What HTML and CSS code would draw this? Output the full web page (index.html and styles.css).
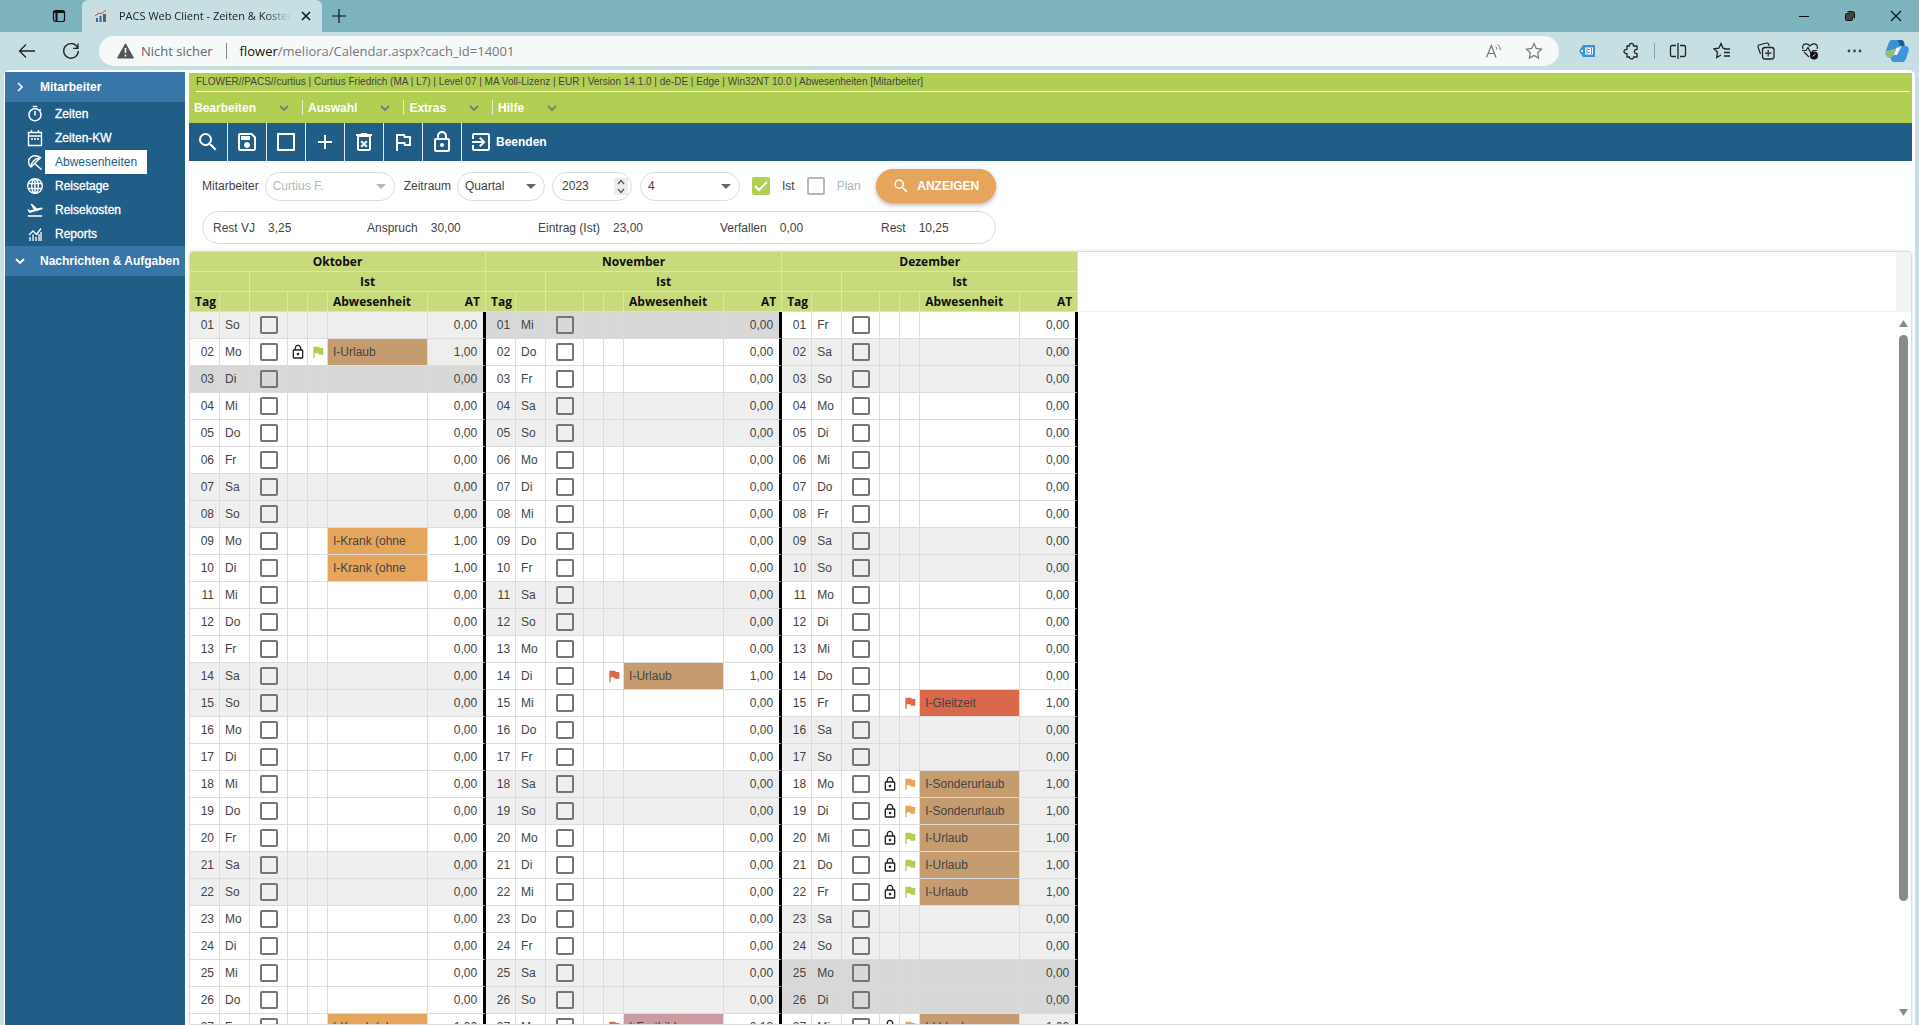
FILE: index.html
```html
<!DOCTYPE html>
<html lang="de">
<head>
<meta charset="utf-8">
<title>PACS Web Client - Zeiten &amp; Kosten</title>
<link rel="stylesheet" href="styles.css">
</head>
<body>
<svg class="sprite" aria-hidden="true">
  <symbol id="search" viewBox="0 0 24 24"><path d="M15.5 14h-.79l-.28-.27A6.47 6.47 0 0 0 16 9.500 6.500 6.500 0 1 0 9.500 16c1.610 0 3.090-.59 4.230-1.570l.27.28v.79l5 4.990L20.490 19l-4.990-5zm-6 0C7.010 14 5 11.990 5 9.500S7.010 5 9.500 5 14 7.010 14 9.500 11.990 14 9.500 14z"/></symbol>
  <symbol id="save" viewBox="0 0 24 24"><path d="M17 3H5c-1.110 0-2 .9-2 2v14c0 1.100.89 2 2 2h14c1.100 0 2-.9 2-2V7l-4-4zm2 16H5V5h11.170L19 7.830V19zm-7-7c-1.660 0-3 1.340-3 3s1.340 3 3 3 3-1.340 3-3-1.340-3-3-3zM6 6h9v4H6V6z"/></symbol>
  <symbol id="square" viewBox="0 0 24 24"><path d="M3 3h18v18H3zM5 5v14h14V5z" fill-rule="evenodd"/></symbol>
  <symbol id="plus" viewBox="0 0 24 24"><path d="M19 13h-6v6h-2v-6H5v-2h6V5h2v6h6v2z"/></symbol>
  <symbol id="bin" viewBox="0 0 24 24"><path d="M14.120 10.470L12 12.590l-2.130-2.120-1.410 1.410L10.590 14l-2.120 2.120 1.410 1.410L12 15.410l2.120 2.120 1.410-1.410L13.410 14l2.120-2.120zM15.500 4l-1-1h-5l-1 1H4v2h16V4zM5 19c0 1.100.9 2 2 2h10c1.100 0 2-.9 2-2V6H5v13zM7 7h10v12H7V7z"/></symbol>
  <symbol id="flag-line" viewBox="0 0 24 24"><path d="M12.360 6l.4 2H18v6h-3.360l-.4-2H7V6h5.360M14 4H5v17h2v-7h5.600l.4 2h7V6h-5.600L14 4z"/></symbol>
  <symbol id="flag" viewBox="0 0 24 24"><path d="M14.400 6L14 4H5v17h2v-7h5.600l.4 2h7V6z"/></symbol>
  <symbol id="lock" viewBox="0 0 24 24"><path d="M18 8h-1V6c0-2.760-2.240-5-5-5S7 3.240 7 6v2H6c-1.100 0-2 .9-2 2v10c0 1.100.9 2 2 2h12c1.100 0 2-.9 2-2V10c0-1.100-.9-2-2-2zM9 6c0-1.660 1.340-3 3-3s3 1.340 3 3v2H9V6zm9 14H6V10h12v10zm-6-3c1.100 0 2-.9 2-2s-.9-2-2-2-2 .9-2 2 .9 2 2 2z"/></symbol>
  <symbol id="exit" viewBox="0 0 24 24"><path d="M10.090 15.590L11.500 17l5-5-5-5-1.410 1.410L12.670 11H3v2h9.670l-2.580 2.590zM19 3H5c-1.110 0-2 .9-2 2v4h2V5h14v14H5v-4H3v4c0 1.100.89 2 2 2h14c1.100 0 2-.9 2-2V5c0-1.100-.9-2-2-2z"/></symbol>
  <symbol id="timer" viewBox="0 0 24 24"><path d="M15 1H9v2h6V1zm-4 13h2V8h-2v6zm8.030-6.610l1.420-1.420c-.43-.51-.9-.99-1.410-1.410l-1.420 1.420C16.070 4.740 14.120 4 12 4c-4.970 0-9 4.030-9 9s4.020 9 9 9 9-4.030 9-9c0-2.120-.74-4.070-1.970-5.610zM12 20c-3.870 0-7-3.130-7-7s3.130-7 7-7 7 3.130 7 7-3.130 7-7 7z"/></symbol>
  <symbol id="plane" viewBox="0 0 24 24"><path d="M2.500 19h19v2h-19v-2zm19.570-9.360c-.21-.8-1.040-1.280-1.840-1.060L14.920 10l-6.900-6.430-1.930.51 4.140 7.170-4.970 1.330-1.970-1.540-1.450.39 2.590 4.490L21 11.490c.81-.23 1.280-1.050 1.070-1.850z"/></symbol>
  <symbol id="calendar" viewBox="0 0 18 18"><g fill="none" stroke="currentColor" stroke-width="1.400"><path d="M2.500 3.500h13v13h-13zM2.500 7h13M5.500 1v3M12.500 1v3"/><path d="M5 10h8" stroke-dasharray="2 1"/></g></symbol>
  <symbol id="umbrella" viewBox="0 0 18 18"><g fill="none" stroke="currentColor" stroke-width="1.500"><path d="M5 14C1.500 10.500 2 6 5 4s6.500-1.500 9.500.5zM8.500 10.500L15.500 16.500M5 14c0-4 3-8 9.500-9.500"/></g></symbol>
  <symbol id="globe" viewBox="0 0 18 18"><g fill="none" stroke="currentColor" stroke-width="1.400"><circle cx="9" cy="9" r="7.300"/><ellipse cx="9" cy="9" rx="3.300" ry="7.300"/><path d="M2.300 6.500h13.400M2.300 11.500h13.400M9 2v14"/></g></symbol>
  <symbol id="chart" viewBox="0 0 18 18"><g fill="none" stroke="currentColor" stroke-width="1.300"><path d="M3 10l4-4 3.500 3.500L15 3.500M4 16v-4M7 16V9.500M10 16v-4M13 16V9M15 16V7"/></g></symbol>
  <symbol id="down" viewBox="0 0 12 12"><path d="M2 4l4 4 4-4" fill="none" stroke="currentColor" stroke-width="1.800"/></symbol>
  <symbol id="right" viewBox="0 0 12 12"><path d="M4 2l4 4-4 4" fill="none" stroke="currentColor" stroke-width="1.500"/></symbol>
</svg>

<header class="browser">
  <div class="tabstrip">
    <button class="icon-btn workspaces" aria-label="Tabaktionen"><svg width="14" height="14" viewBox="0 0 14 14"><rect x="1.500" y="1.500" width="11" height="11" rx="2" fill="none" stroke="#111" stroke-width="1.200"/><path d="M1.500 3h11M4.500 4v8" stroke="#111" stroke-width="2"/></svg></button>
    <div class="tab">
      <svg width="16" height="16" viewBox="0 0 16 16"><rect width="16" height="16" rx="2" fill="#d8d8d6"/><path d="M3 14v-4h2v4zM6.500 14V8h2v6zM10 14V6h3v8z" fill="#2f6d9c"/><path d="M2 8l4-3 2 1 5-4" fill="none" stroke="#666"/></svg>
      <span class="tab-title">PACS Web Client - Zeiten &amp; Kosten</span>
      <button class="icon-btn" aria-label="Tab schließen"><svg width="10" height="10" viewBox="0 0 10 10"><path d="M1 1l8 8M9 1L1 9" stroke="#111" stroke-width="1.500"/></svg></button>
    </div>
    <button class="icon-btn new-tab" aria-label="Neuer Tab"><svg width="14" height="14" viewBox="0 0 14 14"><path d="M7 0v14M0 7h14" stroke="#111" stroke-width="1.200"/></svg></button>
    <div class="window-controls">
      <button class="icon-btn" aria-label="Minimieren"><svg width="12" height="12" viewBox="0 0 12 12"><path d="M1 6.500h10" stroke="#111"/></svg></button>
      <button class="icon-btn" aria-label="Verkleinern"><svg width="12" height="12" viewBox="0 0 12 12" fill="none" stroke="#111"><rect x="1.500" y="3.500" width="7" height="7" rx="1"/><path d="M3.500 1.500h5a2 2 0 0 1 2 2v5"/></svg></button>
      <button class="icon-btn" aria-label="Schließen"><svg width="12" height="12" viewBox="0 0 12 12"><path d="M1 1l10 10M11 1L1 11" stroke="#111" stroke-width="1.200"/></svg></button>
    </div>
  </div>
  <div class="navbar">
    <button class="icon-btn" aria-label="Zurück"><svg width="18" height="18" viewBox="0 0 18 18"><path d="M17 9H2M8 2.500L1.500 9 8 15.500" fill="none" stroke="#222" stroke-width="1.300"/></svg></button>
    <button class="icon-btn reload" aria-label="Aktualisieren"><svg width="18" height="18" viewBox="0 0 18 18"><path d="M15.700 6A7.300 7.300 0 1 0 16.300 9M16 1.500V6.300h-4.800" fill="none" stroke="#222" stroke-width="1.300"/></svg></button>
    <div class="address">
      <svg width="17" height="16" viewBox="0 0 17 16"><path d="M8.500.8L16.500 15H.5z" fill="#555" stroke="#555" stroke-linejoin="round"/><path d="M8.500 5v5M8.500 11.500v2" stroke="#fff" stroke-width="1.600"/></svg>
      <span class="insecure">Nicht sicher</span>
      <span class="url"><b>flower</b>/meliora/Calendar.aspx?cach_id=14001</span>
      <button class="icon-btn read-aloud" aria-label="Laut vorlesen"><svg width="18" height="16" viewBox="0 0 18 16"><path d="M1.500 14.500L6.300 2.500l4.700 12M3 10.500h6.500" fill="none" stroke="#777" stroke-width="1.200"/><path d="M10.500 3.500a4 4 0 0 1 1.500 3M12.500 1.500a7 7 0 0 1 3 5.500" fill="none" stroke="#777"/></svg></button>
      <button class="icon-btn" aria-label="Favorit hinzufügen"><svg width="18" height="18" viewBox="0 0 18 18"><path d="M9 1.500l2.300 4.900 5.200.7-3.800 3.700.9 5.300L9 13.500l-4.600 2.600.9-5.300L1.500 7.100l5.200-.7z" fill="none" stroke="#777" stroke-width="1.200"/></svg></button>
    </div>
    <div class="extensions">
      <button class="icon-btn" aria-label="Erweiterung"><svg width="18" height="16" viewBox="0 0 18 16"><path d="M1 8l4-6h12v12H5z" fill="#3c92d4"/><path d="M7 4.500h8v7H7z" fill="#fff"/><path d="M9 5v6M12 6.500h-2M12 9.500h-2M13.500 5v6" stroke="#3c92d4"/><circle cx="4" cy="8" r="1" fill="#fff"/></svg></button>
      <button class="icon-btn" aria-label="Erweiterungen"><svg width="18" height="18" viewBox="0 0 18 18"><path d="M5 4h2.500c-.5-3.500 4.500-3.500 4 0H15v3.500c-3.500-.5-3.500 4.500 0 4V15h-3.500c.5 2.500-4.500 2.500-4 0H5v-3.500c-4 .5-4-4.500 0-4z" fill="none" stroke="#222" stroke-width="1.300" stroke-linejoin="round"/></svg></button>
      <span class="divider"></span>
      <button class="icon-btn" aria-label="Geteilter Bildschirm"><svg width="18" height="18" viewBox="0 0 18 18"><path d="M7 3.500H3a1.500 1.500 0 0 0-1.500 1.500v8A1.500 1.500 0 0 0 3 14.500h4M11 3.500h4A1.500 1.500 0 0 1 16.500 5v8a1.500 1.500 0 0 1-1.500 1.500h-4M9 1v16" fill="none" stroke="#222" stroke-width="1.300"/></svg></button>
      <button class="icon-btn" aria-label="Favoriten"><svg width="18" height="18" viewBox="0 0 18 18"><path d="M12 6.500L10 6.200 8 1.500 5.800 6.200 1 6.800l3.500 3.500-.8 5.200L8 13M11 7h6M11 10.500h6M11 14h6" fill="none" stroke="#222" stroke-width="1.300"/></svg></button>
      <button class="icon-btn" aria-label="Sammlungen"><svg width="18" height="18" viewBox="0 0 18 18"><path d="M3.500 12L1 5a2 2 0 0 1 1-2l7.500-2a2 2 0 0 1 2 1l.8 2" fill="none" stroke="#222" stroke-width="1.200"/><rect x="5.500" y="5.500" width="11.500" height="11.500" rx="2.500" fill="none" stroke="#222" stroke-width="1.300"/><path d="M11.200 8v6.500M8 11.200h6.500" stroke="#222" stroke-width="1.200"/></svg></button>
      <button class="icon-btn" aria-label="Leistung"><svg width="18" height="18" viewBox="0 0 18 18"><path d="M2 7C0 2 6 0 9 4c3-4 9-2 7 3M3 10l5 5M1 8.500h4l2-3 3 6 2-3h4" fill="none" stroke="#222" stroke-width="1.200"/><circle cx="13" cy="13.500" r="4" fill="#111"/><path d="M11.500 14.500l3-2.500" stroke="#c7e0e3"/></svg></button>
      <button class="icon-btn" aria-label="Mehr"><svg width="18" height="18" viewBox="0 0 18 18" fill="#222"><circle cx="4" cy="9" r="1.400"/><circle cx="9.500" cy="9" r="1.400"/><circle cx="15" cy="9" r="1.400"/></svg></button>
      <button class="icon-btn copilot" aria-label="Copilot"><svg width="24" height="24" viewBox="0 0 24 24"><path d="M7 1h9c2 0 3 1.500 3.500 4L14 8l-3 9-6 1.500c-4 0-5-3-4-7l2.500-7C4.300 2 5.500 1 7 1z" fill="#3c8fd0"/><path d="M.8 12L11 9.500 9 17l-4 1.500c-3.200 0-4.700-2.500-4.200-6.500z" fill="#8fc07a"/><path d="M17 7h3.500c3 0 3.700 2.500 3 5.500l-2.500 7c-.8 2.500-2 3.500-4 3.500H9c-2 0-3-1.500-3.500-4.500L12 16z" fill="#3f93d8"/><path d="M13 1h3c2 0 3 1.500 3.800 6H15z" fill="#1f5c94"/><path d="M11.500 8.500H15L12 16H9z" fill="#eef6fb"/></svg></button>
    </div>
  </div>
</header>

<div class="app">
  <nav class="sidebar" aria-label="Hauptnavigation">
    <button class="group"><svg class="i12"><use href="#right"/></svg>Mitarbeiter</button>
    <ul>
      <li><a href="#"><svg class="i18"><use href="#timer"/></svg><span>Zeiten</span></a></li>
      <li><a href="#"><svg class="i18"><use href="#calendar"/></svg><span>Zeiten-KW</span></a></li>
      <li><a href="#" class="active" aria-current="page"><svg class="i18"><use href="#umbrella"/></svg><span>Abwesenheiten</span></a></li>
      <li><a href="#"><svg class="i18"><use href="#globe"/></svg><span>Reisetage</span></a></li>
      <li><a href="#"><svg class="i18"><use href="#plane"/></svg><span>Reisekosten</span></a></li>
      <li><a href="#"><svg class="i18"><use href="#chart"/></svg><span>Reports</span></a></li>
    </ul>
    <button class="group"><svg class="i12"><use href="#down"/></svg>Nachrichten &amp; Aufgaben</button>
  </nav>

  <main>
    <div class="banner">
      <p class="session">FLOWER//PACS//curtius | Curtius Friedrich (MA | L7) | Level 07 | MA Voll-Lizenz | EUR | Version 14.1.0 | de-DE | Edge | Win32NT 10.0 | Abwesenheiten [Mitarbeiter]</p>
      <div class="menu">
        <button>Bearbeiten<svg class="i12"><use href="#down"/></svg></button>
        <button>Auswahl<svg class="i12"><use href="#down"/></svg></button>
        <button>Extras<svg class="i12"><use href="#down"/></svg></button>
        <button>Hilfe<svg class="i12"><use href="#down"/></svg></button>
      </div>
    </div>
    <div class="toolbar">
      <button aria-label="Suchen"><svg class="i24"><use href="#search"/></svg></button>
      <button aria-label="Speichern"><svg class="i24"><use href="#save"/></svg></button>
      <button aria-label="Auswählen"><svg class="i24"><use href="#square"/></svg></button>
      <button aria-label="Neu"><svg class="i24"><use href="#plus"/></svg></button>
      <button aria-label="Löschen"><svg class="i24"><use href="#bin"/></svg></button>
      <button aria-label="Status"><svg class="i24"><use href="#flag-line"/></svg></button>
      <button aria-label="Sperren"><svg class="i24"><use href="#lock"/></svg></button>
      <button class="wide"><svg class="i24"><use href="#exit"/></svg>Beenden</button>
    </div>

    <form class="filters">
      <label for="employee">Mitarbeiter</label>
      <select id="employee" class="employee" disabled><option>Curtius F.</option></select>
      <label for="period">Zeitraum</label>
      <select id="period" class="period"><option>Quartal</option></select>
      <span class="year"><input id="year" type="text" inputmode="numeric" value="2023" aria-label="Jahr"><svg width="14" height="17" viewBox="0 0 14 17"><rect width="14" height="17" fill="#ececec"/><path d="M4 6l3-3.500L10 6M4 11l3 3.500 3-3.500" fill="none" stroke="#555" stroke-width="1.200"/></svg></span>
      <select class="quarter" aria-label="Quartal"><option>4</option></select>
      <input id="actual" type="checkbox" class="box" checked><label for="actual">Ist</label>
      <input id="plan" type="checkbox" class="box muted" disabled><label for="plan" class="muted">Plan</label>
      <button type="button" class="show"><svg class="i18"><use href="#search"/></svg>ANZEIGEN</button>
    </form>

    <dl class="totals">
      <div><dt>Rest VJ</dt><dd>3,25</dd></div>
      <div><dt>Anspruch</dt><dd>30,00</dd></div>
      <div><dt>Eintrag (Ist)</dt><dd>23,00</dd></div>
      <div><dt>Verfallen</dt><dd>0,00</dd></div>
      <div><dt>Rest</dt><dd>10,25</dd></div>
    </dl>

    <section class="grid">
      <div class="grid-view">
        <table id="calendar-table">
          <colgroup></colgroup>
          <thead></thead>
          <tbody></tbody>
        </table>
      </div>
      <div class="scroll" aria-hidden="true">
        <div class="scroll-head"></div>
        <div class="scroll-track">
          <svg width="9" height="7" viewBox="0 0 9 7"><path d="M4.500 0L9 7H0z" fill="#8a8a8a"/></svg>
          <div class="thumb-lane"><div class="thumb"></div></div>
          <svg width="9" height="7" viewBox="0 0 9 7"><path d="M4.500 7L0 0h9z" fill="#8a8a8a"/></svg>
        </div>
      </div>
    </section>
  </main>
</div>
<script src="calendar.js"></script>
</body>
</html>
```
FILE: styles.css
```css
* { box-sizing: border-box; }

body {
  margin: 0;
  height: 100vh;
  display: flex;
  flex-direction: column;
  overflow: hidden;
  background: #c5e0e3;
  color: #444;
  font: 12px/16px "Liberation Sans", Arial, sans-serif;
}

button, input, select { font: inherit; color: inherit; }
button { margin: 0; padding: 0; border: 0; background: none; cursor: pointer; }
svg { display: block; flex: none; fill: currentColor; }
.sprite { position: absolute; width: 0; height: 0; }
.i12 { width: 12px; height: 12px; }
.i16 { width: 16px; height: 16px; }
.i18 { width: 18px; height: 18px; }
.i24 { width: 24px; height: 24px; }

/* Browser frame */
.browser { flex: none; font-family: "Segoe UI", "Open Sans", sans-serif; }
.icon-btn { display: flex; align-items: center; justify-content: center; }

.tabstrip {
  display: flex;
  height: 32px;
  padding-left: 52px;
  background: #7db4be;
}
.workspaces { width: 14px; margin-right: 16px; }
.tab {
  display: flex;
  align-items: center;
  gap: 10px;
  width: 240px;
  padding: 0 11px;
  border-radius: 6px 6px 0 0;
  background: #c6dfe2;
}
.tab-title {
  flex: 1;
  overflow: hidden;
  white-space: nowrap;
  color: #222;
  font-size: 11px;
  -webkit-mask-image: linear-gradient(90deg, #000 85%, transparent);
  mask-image: linear-gradient(90deg, #000 85%, transparent);
}
.new-tab { width: 34px; }
.window-controls { display: flex; gap: 34px; margin-left: auto; padding-right: 17px; }

.navbar {
  display: flex;
  align-items: center;
  height: 38px;
  padding: 0 10px 0 18px;
  background: #c6dfe2;
}
.reload { margin: 0 19px 0 26px; }
.address {
  display: flex;
  align-items: center;
  flex: 1;
  height: 30px;
  padding: 0 16px 0 18px;
  border-radius: 15px;
  background: #f6f9fa;
  font-size: 13px;
}
.insecure {
  margin-left: 7px;
  padding-right: 13px;
  border-right: 1px solid #888;
  color: #666;
}
.url { margin-left: 13px; color: #777; }
.url b { color: #111; font-weight: 400; }
.read-aloud { margin: 0 22px 0 auto; }
.extensions { display: flex; align-items: center; gap: 26px; margin-left: 19px; }
.extensions .divider { width: 1px; height: 16px; margin: 0 -12px; background: #8ba3a6; }
.copilot { margin-left: -4px; }

/* Application */
.app {
  display: flex;
  flex: 1;
  min-height: 0;
  margin: 0 4px;
  padding: 2px 3px 0 1px;
  border-radius: 6px 6px 0 0;
  background: #fff;
}

.sidebar { width: 180px; margin-right: 4px; flex: none; background: #205e88; color: #fff; }
.group {
  display: flex;
  align-items: center;
  gap: 14px;
  width: 100%;
  height: 30px;
  padding-left: 9px;
  background: #3876a8;
  font-weight: 700;
  white-space: nowrap;
}
.sidebar ul { margin: 0; padding: 0; list-style: none; }
.sidebar li a {
  display: flex;
  align-items: center;
  height: 24px;
  padding-left: 21px;
  gap: 1px;
  color: #fff;
  text-decoration: none;
  -webkit-text-stroke: 0.3px #fff;
}
.sidebar li span { padding: 4px 10px; }
.sidebar .active span { background: #fff; color: #205e88; -webkit-text-stroke: 0; }

main { display: flex; flex-direction: column; flex: 1; min-width: 0; }

.banner { height: 50px; margin-top: 1px; flex: none; background: #b1cf52; }
.banner .session {
  margin: 0 3px 0 7px;
  height: 19px;
  border-bottom: 1px solid #fff;
  font-size: 10px;
  line-height: 18px;
  color: #444;
}
.menu { display: flex; height: 31px; align-items: center; padding-left: 5px; }
.menu button {
  display: flex;
  align-items: center;
  height: 15px;
  gap: 22px;
  padding-right: 12px;
  margin-right: 5px;
  border-right: 1px solid #e6efc5;
  color: #fff;
  font-weight: 700;
}
.menu button:last-child { border-right: 0; }
.menu svg { color: #6f7f7c; }

.toolbar { display: flex; flex: none; height: 38px; background: #205e88; color: #fff; }
.toolbar button {
  display: flex;
  align-items: center;
  justify-content: center;
  width: 39px;
  border-right: 1px solid #e1e8ee;
}
.toolbar .wide { width: auto; gap: 3px; padding-left: 7px; border-right: 0; font-weight: 700; }

.filters { display: flex; align-items: center; height: 50px; padding-left: 13px; flex: none; }
.filters label + select { margin-left: 6px; }
.filters select, .year {
  height: 29px;
  border: 1px solid #d9dcdc;
  border-radius: 15px;
  background: #fff;
  margin-right: 8px;
}
.filters select {
  appearance: none;
  padding: 0 7px;
  background: #fff url("data:image/svg+xml,%3Csvg xmlns='http://www.w3.org/2000/svg' width='10' height='5'%3E%3Cpath d='M0 0h10L5 5z' fill='%23666'/%3E%3C/svg%3E") no-repeat right 8px center;
}
.filters select:disabled { color: #b4bab9; opacity: 1; background-image: url("data:image/svg+xml,%3Csvg xmlns='http://www.w3.org/2000/svg' width='10' height='5'%3E%3Cpath d='M0 0h10L5 5z' fill='%23b4bab9'/%3E%3C/svg%3E"); }
.filters .employee { width: 130px; margin-right: 9px; }
.filters .period { width: 88px; margin-right: 7px; }
.year { display: flex; align-items: center; width: 80px; padding: 0 3px 0 9px; }
.year input { width: 50px; flex: 1; padding: 0; border: 0; background: none; outline: 0; }
.filters .quarter { width: 100px; margin-right: 12px; }
.filters .box + label { margin: 0 12px; }
.filters .muted { color: #aeb5b4; }

.box {
  appearance: none;
  display: block;
  flex: none;
  width: 18px;
  height: 18px;
  margin: 0;
  border: 2px solid #757575;
  border-radius: 2px;
}
.box.muted { border-color: #b4bab9; }
.box:checked {
  border-color: #b1cf52;
  background: #b1cf52 url("data:image/svg+xml,%3Csvg xmlns='http://www.w3.org/2000/svg' width='14' height='14'%3E%3Cpath d='M1 7l4 4 8-8' fill='none' stroke='%23fff' stroke-width='2'/%3E%3C/svg%3E") no-repeat center;
}

.show {
  display: flex;
  align-items: center;
  justify-content: center;
  gap: 7px;
  width: 120px;
  height: 34px;
  margin-left: 3px;
  border-radius: 17px;
  background: #e6a55c;
  box-shadow: 0 2px 4px rgba(0, 0, 0, .3);
  color: #fff;
  font-weight: 700;
}

.totals {
  display: grid;
  grid-template-columns: 154px 171px 182px 161px auto;
  align-items: center;
  flex: none;
  width: 794px;
  height: 33px;
  margin: 0 0 7px 13px;
  padding-left: 10px;
  border: 1px solid #d9dcdc;
  border-radius: 17px;
}
.totals div { display: flex; gap: 13px; }
.totals dd { margin: 0; }

/* Calendar grid */
.grid {
  display: flex;
  flex: 1;
  min-height: 0;
  border: 1px solid #dcdcdc;
  border-radius: 4px 4px 0 0;
  box-shadow: 0 0 4px rgba(0, 0, 0, .12);
  overflow: hidden;
}
.grid-view { flex: 1; min-width: 0; overflow: hidden; }
table { width: 100%; table-layout: fixed; border-collapse: separate; border-spacing: 0; }
.c-day { width: 30px; }
.c-box { width: 38px; }
.c-icon { width: 20px; }
.c-type { width: 100px; }
.c-amount { width: 58px; }

th, td { padding: 0 5px; border: solid #dcdcdc; border-width: 0 1px 1px 0; overflow: hidden; white-space: nowrap; text-align: left; }
th {
  height: 20px;
  background: #c7db7d;
  color: #111;
  font: 700 12px/16px "Open Sans", "Noto Sans", sans-serif;
}
th.center { text-align: center; }
th.amount, td.amount { text-align: right; }
th.tag { padding: 0 2px 0 5px; }
th.rest { background: #fff; border-color: transparent; }
tr:last-child th.rest { border-bottom-color: #eef1f1; }

td { height: 27px; }
td.num { text-align: right; }
td.icon { padding: 0 2px; color: #222; }
td.icon svg { margin: 0 auto; }
td.tick { padding: 0 9px 0 10px; }
td.amount { padding-right: 6px; border-right: 3px solid #000; }
td.rest { border: 0; }
.weekend { background: #efefef; }
.holiday { background: #d8d8d8; }
.locked { background: #eeeeec; }
td.green { color: #b1cf52; }
td.orange { color: #e6a55c; }
td.red { color: #d9694a; }
.vacation { background: #c49c70; }
.sick { background: #e6a55c; }
.flexday { background: #d9694a; }
.training { background: #cc9aa1; }

.scroll { display: flex; flex-direction: column; width: 15px; flex: none; }
.scroll-head { height: 60px; background: #f3f3f3; }
.scroll-track { display: flex; flex: 1; flex-direction: column; align-items: center; padding: 8px 0; gap: 8px; }
.thumb-lane { flex: 1; }
.thumb { width: 9px; height: 85%; border-radius: 5px; background: #8a8a8a; }
```
FILE: calendar.js
```js
const WEEKDAYS = ["So", "Mo", "Di", "Mi", "Do", "Fr", "Sa"];
const VISIBLE_DAYS = 27;
const vacation = { text: "I-Urlaub", type: "vacation" };
const special = { text: "I-Sonderurlaub", type: "vacation" };
const sick = { text: "I-Krank (ohne", type: "sick" };

const months = [
  {
    name: "Oktober", firstWeekday: 0, holidays: [3],
    entries: {
      2: { ...vacation, lock: true, flag: "green" },
      9: sick, 10: sick, 27: sick
    }
  },
  {
    name: "November", firstWeekday: 3, holidays: [1],
    entries: {
      14: { ...vacation, flag: "red" },
      27: { text: "I-Fortbildung", type: "training", flag: "red", amount: "0,13" }
    }
  },
  {
    name: "Dezember", firstWeekday: 5, holidays: [25, 26],
    entries: {
      15: { text: "I-Gleitzeit", type: "flexday", flag: "red" },
      18: { ...special, lock: true, flag: "orange" },
      19: { ...special, lock: true, flag: "orange" },
      20: { ...vacation, lock: true, flag: "green" },
      21: { ...vacation, lock: true, flag: "green" },
      22: { ...vacation, lock: true, flag: "green" },
      27: { ...vacation, lock: true, flag: "orange" }
    }
  }
];

const icon = name => `<svg class="i16"><use href="#${name}"/></svg>`;
const perMonth = render => months.map(render).join("");

function dayCells(month, day) {
  const weekday = (month.firstWeekday + day - 1) % 7;
  const shade = month.holidays.includes(day) ? "holiday"
    : weekday === 0 || weekday === 6 ? "weekend" : "";
  const entry = month.entries[day] || {};
  const number = String(day).padStart(2, "0");
  return `
    <td class="num ${shade}">${number}</td>
    <td class="${shade}">${WEEKDAYS[weekday]}</td>
    <td class="tick ${shade}"><input type="checkbox" class="box" aria-label="${number}. ${month.name}"></td>
    <td class="icon ${shade}">${entry.lock ? icon("lock") : ""}</td>
    <td class="icon ${shade} ${entry.flag || ""}">${entry.flag ? icon("flag") : ""}</td>
    <td class="${entry.type || shade}">${entry.text || ""}</td>
    <td class="amount ${entry.lock ? "locked" : shade}">${entry.amount || (entry.text ? "1,00" : "0,00")}</td>`;
}

const table = document.getElementById("calendar-table");
table.querySelector("colgroup").innerHTML = perMonth(() =>
  `<col class="c-day"><col class="c-day"><col class="c-box"><col class="c-icon"><col class="c-icon"><col class="c-type"><col class="c-amount">`) + "<col>";

table.tHead.innerHTML = `
  <tr>${perMonth(m => `<th class="center" colspan="7">${m.name}</th>`)}<th class="rest"></th></tr>
  <tr>${perMonth(() => `<th colspan="2"></th><th class="center" colspan="5">Ist</th>`)}<th class="rest"></th></tr>
  <tr>${perMonth(() => `<th class="tag">Tag</th><th></th><th></th><th></th><th></th><th>Abwesenheit</th><th class="amount">AT</th>`)}<th class="rest"></th></tr>`;

table.tBodies[0].innerHTML = Array.from({ length: VISIBLE_DAYS }, (_, i) =>
  `<tr>${perMonth(m => dayCells(m, i + 1))}<td class="rest"></td></tr>`).join("");
```
